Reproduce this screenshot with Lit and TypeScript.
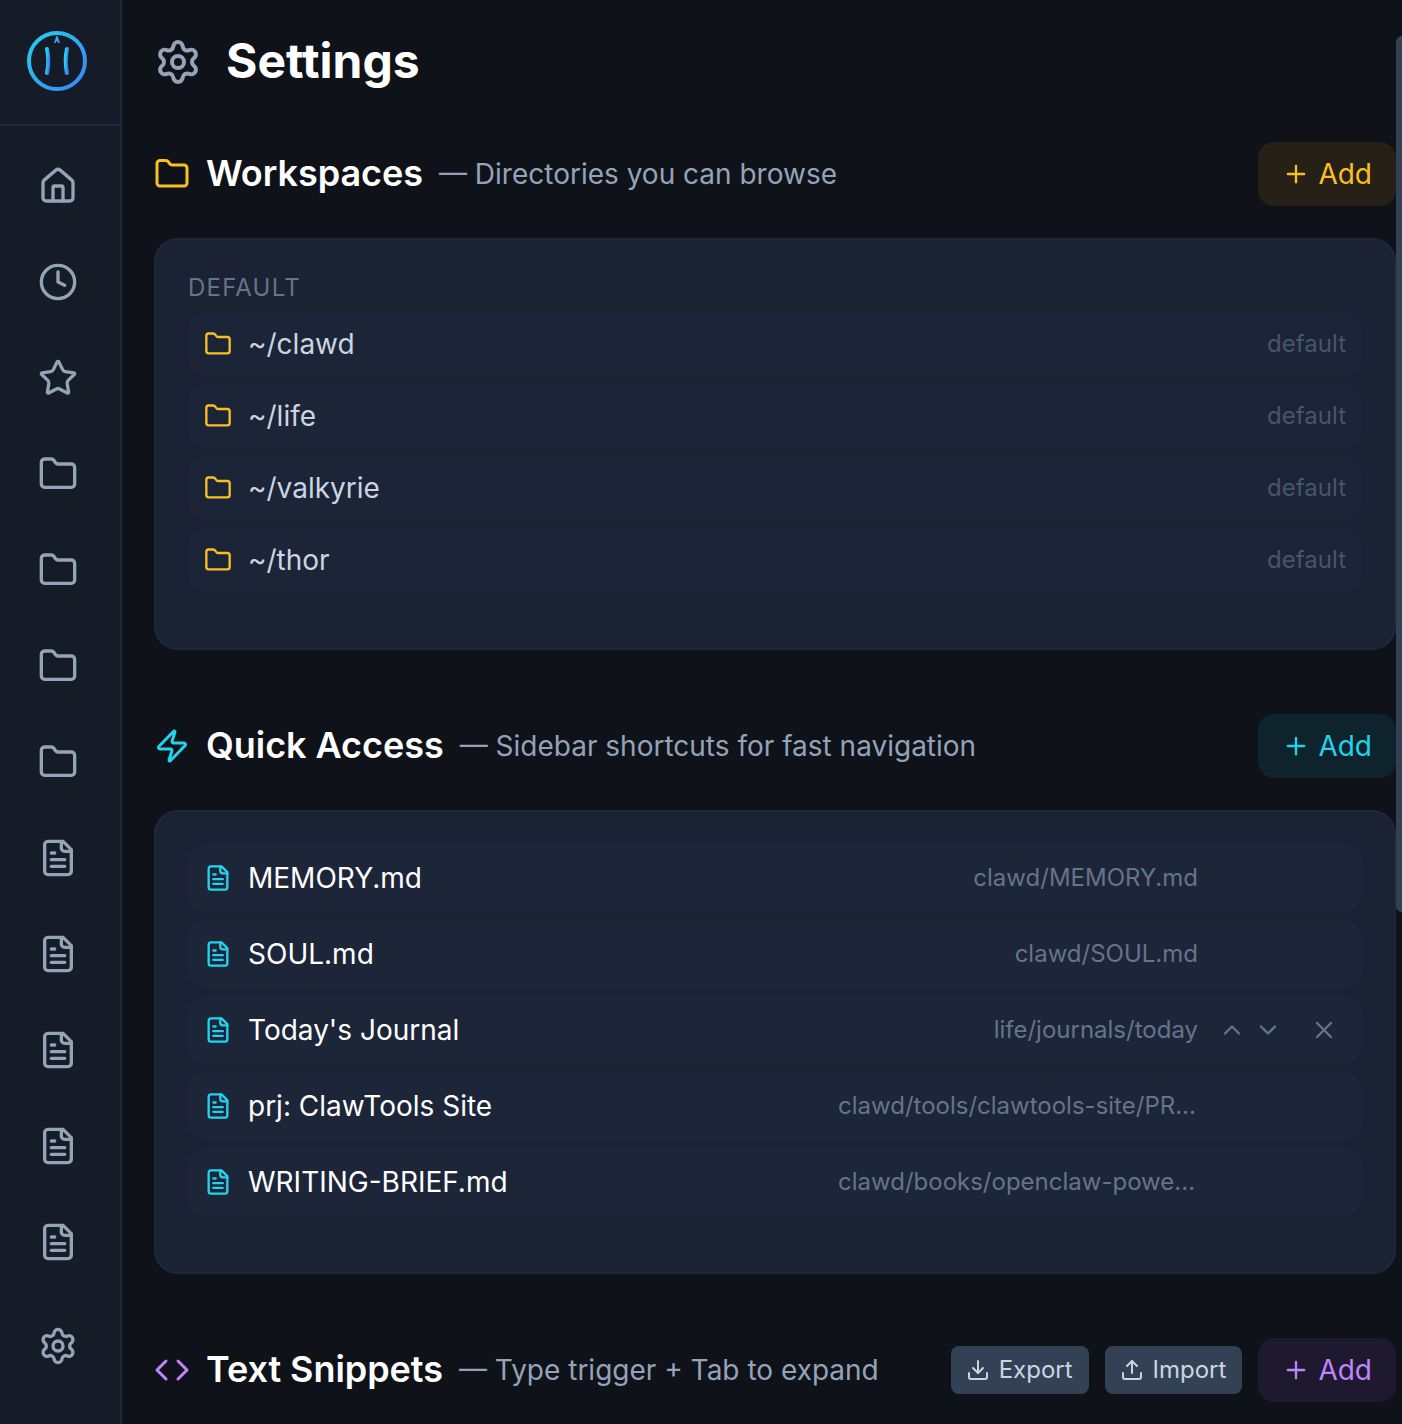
import { LitElement, html, css, svg, nothing } from "lit";
import { customElement, property } from "lit/decorators.js";

const ICONS: Record<string, unknown> = {
  settings: svg`<path d="M9.671 4.136a2.34 2.34 0 0 1 4.659 0 2.34 2.34 0 0 0 3.319 1.915 2.34 2.34 0 0 1 2.33 4.033 2.34 2.34 0 0 0 0 3.831 2.34 2.34 0 0 1-2.33 4.033 2.34 2.34 0 0 0-3.319 1.915 2.34 2.34 0 0 1-4.659 0 2.34 2.34 0 0 0-3.32-1.915 2.34 2.34 0 0 1-2.33-4.033 2.34 2.34 0 0 0 0-3.831A2.34 2.34 0 0 1 6.35 6.051a2.34 2.34 0 0 0 3.319-1.915"/><circle cx="12" cy="12" r="3"/>`,
  house: svg`<path d="M15 21v-8a1 1 0 0 0-1-1h-4a1 1 0 0 0-1 1v8"/><path d="M3 10a2 2 0 0 1 .709-1.528l7-6a2 2 0 0 1 2.582 0l7 6A2 2 0 0 1 21 10v9a2 2 0 0 1-2 2H5a2 2 0 0 1-2-2z"/>`,
  clock: svg`<circle cx="12" cy="12" r="10"/><path d="M12 6v6l4 2"/>`,
  star: svg`<path d="M11.525 2.295a.53.53 0 0 1 .95 0l2.31 4.679a2.123 2.123 0 0 0 1.595 1.16l5.166.756a.53.53 0 0 1 .294.904l-3.736 3.638a2.123 2.123 0 0 0-.611 1.878l.882 5.14a.53.53 0 0 1-.771.56l-4.618-2.428a2.122 2.122 0 0 0-1.973 0L6.396 21.01a.53.53 0 0 1-.77-.56l.881-5.139a2.122 2.122 0 0 0-.611-1.879L2.16 9.795a.53.53 0 0 1 .294-.906l5.165-.755a2.122 2.122 0 0 0 1.597-1.16z"/>`,
  folder: svg`<path d="M20 20a2 2 0 0 0 2-2V8a2 2 0 0 0-2-2h-7.9a2 2 0 0 1-1.69-.9L9.6 3.9A2 2 0 0 0 7.93 3H4a2 2 0 0 0-2 2v13a2 2 0 0 0 2 2Z"/>`,
  file: svg`<path d="M15 2H6a2 2 0 0 0-2 2v16a2 2 0 0 0 2 2h12a2 2 0 0 0 2-2V7Z"/><path d="M14 2v4a2 2 0 0 0 2 2h4"/><path d="M10 9H8"/><path d="M16 13H8"/><path d="M16 17H8"/>`,
  zap: svg`<path d="M4 14a1 1 0 0 1-.78-1.63l9.9-10.2a.5.5 0 0 1 .86.46l-1.92 6.02A1 1 0 0 0 13 10h7a1 1 0 0 1 .78 1.63l-9.9 10.2a.5.5 0 0 1-.86-.46l1.92-6.02A1 1 0 0 0 11 14z"/>`,
  code: svg`<path d="m16 18 6-6-6-6"/><path d="m8 6-6 6 6 6"/>`,
  plus: svg`<path d="M5 12h14"/><path d="M12 5v14"/>`,
  up: svg`<path d="m18 15-6-6-6 6"/>`,
  down: svg`<path d="m6 9 6 6 6-6"/>`,
  x: svg`<path d="M18 6 6 18"/><path d="m6 6 12 12"/>`,
  download: svg`<path d="M12 15V3"/><path d="M21 15v4a2 2 0 0 1-2 2H5a2 2 0 0 1-2-2v-4"/><path d="m7 10 5 5 5-5"/>`,
  upload: svg`<path d="M12 3v12"/><path d="m17 8-5-5-5 5"/><path d="M21 15v4a2 2 0 0 1-2 2H5a2 2 0 0 1-2-2v-4"/>`,
};

@customElement("app-icon")
class AppIcon extends LitElement {
  @property() name = "";

  static styles = css`
    :host { display: block; flex: none; width: 28px; height: 28px; }
    .glyph { display: block; width: 100%; height: 100%; }
  `;

  render() {
    return html`<svg class="glyph" viewBox="0 0 24 24" fill="none" stroke="currentColor"
      stroke-width="2" stroke-linecap="round" stroke-linejoin="round">${ICONS[this.name]}</svg>`;
  }
}

@customElement("app-sidebar")
class AppSidebar extends LitElement {
  private items = ["house", "clock", "star", "folder", "folder", "folder", "folder", "file", "file", "file", "file", "file"];

  static styles = css`
    :host {
      display: flex; flex-direction: column; flex: none; box-sizing: border-box;
      width: 122px; height: 100%; background: #161b28; border-right: 2px solid #1e293b; color: #94a3b8;
    }
    .brand {
      display: flex; justify-content: center; align-items: center; box-sizing: border-box;
      height: 126px; padding: 0 6px 2px 0; border-bottom: 2px solid #1e293b;
    }
    .logo { display: block; width: 64px; height: 64px; }
    .nav { display: flex; flex-direction: column; gap: 16px; padding: 20px 4px 0 0; align-items: center; }
    .item { display: grid; place-items: center; width: 80px; height: 80px; }
    .foot { display: flex; justify-content: center; padding: 24px 4px 0 0; }
    .item app-icon { width: 40px; height: 40px; }
  `;

  render() {
    return html`
      <div class="brand">
        <svg class="logo" viewBox="0 0 64 64" fill="none">
          <defs>
            <linearGradient id="g" x1="0" y1="0" x2="1" y2="1">
              <stop offset="0" stop-color="#22d3ee" /><stop offset="1" stop-color="#3b82f6" />
            </linearGradient>
          </defs>
          <circle cx="32" cy="32" r="28" stroke="url(#g)" stroke-width="4" />
          <path d="M22 20Q24.6 32 22 44" stroke="url(#g)" stroke-width="4" stroke-linecap="round" />
          <path d="M42 20Q39.4 32 42 44" stroke="url(#g)" stroke-width="4" stroke-linecap="round" />
          <path d="M31.4 7h1.2L35 14h-1.5L32 11.8 30.5 14H29z" fill="#38a8f6" />
        </svg>
      </div>
      <nav class="nav">
        ${this.items.map((n) => html`<div class="item"><app-icon name=${n}></app-icon></div>`)}
      </nav>
      <div class="foot"><div class="item"><app-icon name="settings"></app-icon></div></div>
    `;
  }
}

@customElement("settings-section")
class SettingsSection extends LitElement {
  @property() icon = "";
  @property() heading = "";
  @property() note = "";
  @property({ reflect: true }) tone = "amber";

  static styles = css`
    :host { display: flex; flex-direction: column; gap: 32px; --tone: #fbbf24; --wash: rgba(245, 158, 11, 0.1); }
    :host([tone="cyan"]) { --tone: #22d3ee; --wash: rgba(6, 182, 212, 0.1); }
    :host([tone="purple"]) { --tone: #c084fc; --wash: rgba(168, 85, 247, 0.1); }
    .head { display: flex; align-items: center; gap: 16px; height: 64px; white-space: nowrap; }
    .head > app-icon { width: 36px; height: 36px; color: var(--tone); }
    .title { margin: 0; padding-bottom: 2px; font-size: 36px; line-height: 56px; font-weight: 600; letter-spacing: -0.05px; color: #fff; }
    .note { flex: 1; color: #94a3b8; }
    .add {
      display: flex; align-items: center; gap: 8px; height: 64px; padding: 0 24px;
      border-radius: 16px; background: var(--wash); color: var(--tone);
    }
  `;

  render() {
    return html`
      <div class="head">
        <app-icon name=${this.icon}></app-icon>
        <h2 class="title">${this.heading}</h2>
        <span class="note">${this.note}</span>
        <slot name="actions"></slot>
        <div class="add"><app-icon name="plus"></app-icon><span>Add</span></div>
      </div>
      <slot></slot>
    `;
  }
}

@customElement("app-root")
class AppRoot extends LitElement {
  private workspaces = ["~/clawd", "~/life", "~/valkyrie", "~/thor"];
  private shortcuts = [
    { name: "MEMORY.md", path: "clawd/MEMORY.md" },
    { name: "SOUL.md", path: "clawd/SOUL.md" },
    { name: "Today's Journal", path: "life/journals/today", active: true },
    { name: "prj: ClawTools Site", path: "clawd/tools/clawtools-site/PR..." },
    { name: "WRITING-BRIEF.md", path: "clawd/books/openclaw-powe..." },
  ];

  static styles = css`
    :host {
      display: flex; position: relative; width: 1402px; height: 1424px; overflow: hidden;
      background: #0f1219; font-family: Inter, "Liberation Sans", sans-serif;
      font-size: 28px; line-height: 40px; color: #fff;
      font-variation-settings: "opsz" 14;
    }
    .main { flex: 1; min-width: 0; padding: 30px 6px 0 32px; display: flex; flex-direction: column; }
    .page-head { display: flex; align-items: center; gap: 24px; height: 64px; margin-bottom: 48px; }
    .page-head app-icon { width: 48px; height: 48px; color: #94a3b8; }
    .page-title { margin: 0; padding-bottom: 2px; font-size: 48px; line-height: 64px; font-weight: 700; }
    .sections { display: flex; flex-direction: column; gap: 64px; }
    .card {
      display: flex; flex-direction: column; gap: 8px; padding: 32px 32px 56px;
      border: 2px solid #1e293b; border-radius: 24px; background: #1a2234;
    }
    .label { font-size: 24px; line-height: 32px; letter-spacing: 1.2px; color: #64748b; }
    .row {
      display: flex; align-items: center; gap: 16px; box-sizing: border-box; height: 64px;
      padding: 0 16px; border-radius: 16px; background: #1c2438; color: #cbd5e1; white-space: nowrap;
    }
    .row app-icon { color: #fbbf24; }
    .row .name { flex: 1; }
    .tag { font-size: 24px; line-height: 32px; color: #475569; }
    .row.tall { height: 68px; background: #1d2539; color: #fff; }
    .row.tall > app-icon { color: #22d3ee; }
    .path { font-size: 24px; line-height: 32px; color: #64748b; width: 360px; text-align: right; }
    .path.cut { text-align: left; }
    .moves { display: flex; width: 72px; justify-content: space-around; }
    .remove { display: grid; place-items: center; width: 44px; height: 44px; }
    .row .moves app-icon, .row .remove app-icon { color: #64748b; }
    .io {
      display: flex; align-items: center; gap: 9px; height: 48px; padding: 0 16px 0 15px; border-radius: 8px;
      background: #334155; color: #cbd5e1; font-size: 24px; line-height: 32px;
    }
    .io app-icon { width: 24px; height: 24px; }
    .thumb {
      position: absolute; left: 1396px; top: 36px; width: 12px; height: 876px;
      border-radius: 6px; background: #334155;
    }
  `;

  render() {
    return html`
      <app-sidebar></app-sidebar>
      <main class="main">
        <header class="page-head">
          <app-icon name="settings"></app-icon>
          <h1 class="page-title">Settings</h1>
        </header>
        <div class="sections">
          <settings-section icon="folder" heading="Workspaces" note="— Directories you can browse" tone="amber">
            <div class="card">
              <div class="label">DEFAULT</div>
              ${this.workspaces.map((w) => html`
                <div class="row">
                  <app-icon name="folder"></app-icon><span class="name">${w}</span><span class="tag">default</span>
                </div>`)}
            </div>
          </settings-section>
          <settings-section icon="zap" heading="Quick Access" note="— Sidebar shortcuts for fast navigation" tone="cyan">
            <div class="card">
              ${this.shortcuts.map((s) => html`
                <div class="row tall">
                  <app-icon name="file"></app-icon><span class="name">${s.name}</span>
                  <span class="path ${s.path.endsWith("...") ? "cut" : ""}">${s.path}</span>
                  <div class="moves">${s.active
                    ? html`<app-icon name="up"></app-icon><app-icon name="down"></app-icon>` : nothing}</div>
                  <div class="remove">${s.active ? html`<app-icon name="x"></app-icon>` : nothing}</div>
                </div>`)}
            </div>
          </settings-section>
          <settings-section icon="code" heading="Text Snippets" note="— Type trigger + Tab to expand" tone="purple">
            <div class="io" slot="actions"><app-icon name="download"></app-icon><span>Export</span></div>
            <div class="io" slot="actions"><app-icon name="upload"></app-icon><span>Import</span></div>
          </settings-section>
        </div>
      </main>
      <div class="thumb"></div>
    `;
  }
}
